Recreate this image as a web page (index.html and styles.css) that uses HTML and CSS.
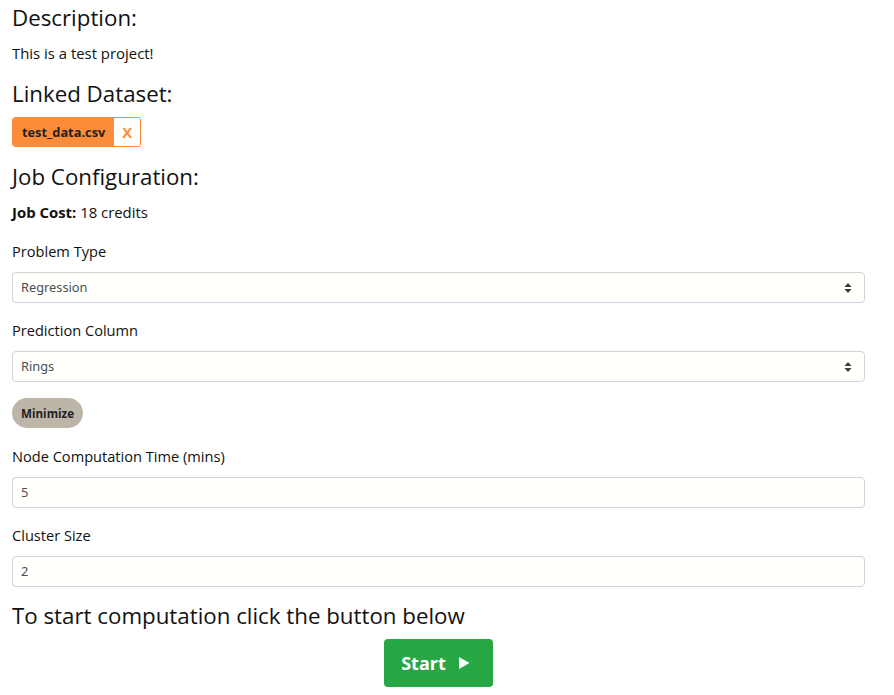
FILE: index.html
```html
<!DOCTYPE html>
<html>
<head>
<meta charset="utf-8">
<link rel="stylesheet" href="styles.css">
</head>
<body>
<div class="page">
  <h2 class="heading first">Description:</h2>
  <p class="text desc">This is a test project!</p>

  <h2 class="heading">Linked Dataset:</h2>
  <div class="badge">
    <span class="badge-name">test_data.csv</span>
    <span class="badge-x">X</span>
  </div>

  <h2 class="heading">Job Configuration:</h2>
  <p class="text cost"><b>Job Cost:</b> 18 credits</p>

  <div class="field">
    <label class="label">Problem Type</label>
    <div class="select-wrap">
      <select class="control select"><option>Regression</option></select>
      <svg class="arrows" width="8" height="12" viewBox="0 0 8 12"><path d="M4 1 L7.5 5 H0.5 Z M4 11 L7.5 7 H0.5 Z" fill="#343a40"/></svg>
    </div>
  </div>

  <div class="field">
    <label class="label">Prediction Column</label>
    <div class="select-wrap">
      <select class="control select"><option>Rings</option></select>
      <svg class="arrows" width="8" height="12" viewBox="0 0 8 12"><path d="M4 1 L7.5 5 H0.5 Z M4 11 L7.5 7 H0.5 Z" fill="#343a40"/></svg>
    </div>
  </div>

  <button class="pill">Minimize</button>

  <div class="field after-pill">
    <label class="label">Node Computation Time (mins)</label>
    <input class="control" type="text" value="5">
  </div>

  <div class="field">
    <label class="label">Cluster Size</label>
    <input class="control" type="text" value="2">
  </div>

  <h2 class="heading last">To start computation click the button below</h2>
  <div class="actions">
    <button class="start">Start
      <svg width="12" height="14" viewBox="0 0 12 14"><path d="M1 1 L11.5 7 L1 13 Z" fill="#fff"/></svg>
    </button>
  </div>
</div>
</body>
</html>
```
FILE: styles.css
```css
* { box-sizing: border-box; }
html, body { margin: 0; padding: 0; background: #fff; }
body {
  font-family: "Open Sans", "Noto Sans", sans-serif;
  color: #111;
}
.page {
  width: 877px;
  padding: 0 0 0 12px;
}
.heading {
  margin: 0;
  font-size: 22.3px;
  font-weight: 400;
  line-height: 26px;
  color: #111;
}
.heading.first { margin-top: 5px; }
.text {
  margin: 13px 0 19px;
  font-size: 14.9px;
  line-height: 18px;
}
.text.cost { margin-bottom: 21px; }
.text b { font-weight: 700; }
.badge {
  display: inline-flex;
  margin: 10px 0 17px;
  height: 30px;
  border: 1px solid #fd8c3a;
  border-radius: 3px;
  overflow: hidden;
}
.badge-name {
  display: flex;
  align-items: center;
  background: #fd8c3a;
  color: #222;
  font-weight: 700;
  font-size: 12.8px;
  padding: 0 9px;
}
.badge-x {
  display: flex;
  align-items: center;
  justify-content: center;
  width: 26px;
  background: #fff;
  color: #fd8c3a;
  font-weight: 700;
  font-size: 15px;
}
.field { margin-top: 18px; }
.label {
  display: block;
  font-size: 14.6px;
  line-height: 18px;
  margin-bottom: 12px;
  color: #111;
}
.control {
  display: block;
  width: 853px;
  height: 31px;
  padding: 0 8px 2px;
  border: 1px solid #ced4da;
  border-radius: 4px;
  background: #fffffc;
  font-family: "Noto Sans", sans-serif;
  font-size: 12.8px;
  color: #495057;
  outline: none;
}
.select-wrap { position: relative; width: 853px; }
.select { -webkit-appearance: none; appearance: none; }
.arrows { position: absolute; right: 13px; top: 10px; }
.pill {
  display: block;
  margin-top: 16px;
  height: 30px;
  padding: 0 9px;
  border: none;
  border-radius: 15px;
  background: #bdb6a8;
  color: #222;
  font-family: "Open Sans", sans-serif;
  font-weight: 700;
  font-size: 11.6px;
}
.field.after-pill { margin-top: 19px; }
.heading.last { margin-top: 16px; }
.actions {
  display: flex;
  justify-content: center;
  width: 853px;
  margin-top: 10px;
}
.start {
  display: flex;
  align-items: center;
  gap: 12px;
  width: 109px;
  height: 48px;
  padding: 0 6px 0 0;
  justify-content: center;
  border: none;
  border-radius: 4px;
  background: #28a745;
  color: #fff;
  font-family: "Open Sans", sans-serif;
  font-weight: 700;
  font-size: 18px;
}
```
